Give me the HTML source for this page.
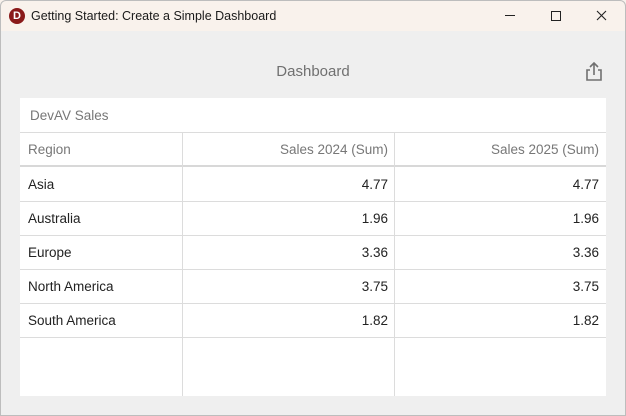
<!DOCTYPE html>
<html><head><style>
*{margin:0;padding:0;box-sizing:border-box}
body{width:626px;height:416px;overflow:hidden;background:#efefef;font-family:"Liberation Sans","DejaVu Sans",sans-serif;position:relative}
.frame{position:absolute;left:0;top:0;width:626px;height:416px;border:1px solid #bdbdbd;border-radius:6px 6px 0 0;pointer-events:none}
.tb{position:absolute;left:0;top:0;width:626px;height:31px;background:#f9f2ec}
.logo{position:absolute;left:9px;top:8px;width:16px;height:16px;border-radius:50%;background:#8a1a1a;color:#fff;font-size:11px;font-weight:bold;text-align:center;line-height:16px}
.ttl{position:absolute;left:31px;top:9px;font-size:12.5px;color:#1a1a1a}
.dash{position:absolute;left:0;width:626px;top:63px;text-align:center;font-size:15px;color:#707070}
.card{position:absolute;left:20px;top:98px;width:586px;height:298px;background:#fff}
.cap{height:35px;line-height:36px;padding-left:10px;color:#777;font-size:13.5px;border-bottom:1px solid #dcdcdc}
.row{position:absolute;left:0;width:586px;height:34px;border-bottom:1px solid #dcdcdc;font-size:13.5px;color:#222}
.row div{position:absolute;top:0;line-height:34px}
.c1{left:8px}.c2{right:218px}.c3{right:7px}
.hd{color:#777;border-bottom:2px solid #d8d8d8}
.vl{position:absolute;top:35px;width:1px;height:263px;background:#dcdcdc}
</style></head><body>
<div class="tb"><div class="logo">D</div><div class="ttl">Getting Started: Create a Simple Dashboard</div>
<svg style="position:absolute;left:500px;top:8px" width="120" height="16" viewBox="0 0 120 16"><path d="M5 7.5h10" stroke="#222" stroke-width="1"/><rect x="51.5" y="3.5" width="9" height="9" fill="none" stroke="#222"/><path d="M97 3l9 9M106 3l-9 9" stroke="#222" stroke-width="1.1"/></svg></div>
<div class="dash">Dashboard</div>
<svg style="position:absolute;left:584px;top:61px" width="20" height="20" viewBox="0 0 20 20"><path d="M6 9H3v10h14V9h-3M10 14V2M6 6l4-4 4 4" fill="none" stroke="#707070" stroke-width="1.6"/></svg>
<div class="card">
<div class="cap">DevAV Sales</div>
<div class="row hd" style="top:35px"><div class="c1">Region</div><div class="c2">Sales 2024 (Sum)</div><div class="c3">Sales 2025 (Sum)</div></div>
<div class="row" style="top:70px"><div class="c1">Asia</div><div class="c2">4.77</div><div class="c3">4.77</div></div>
<div class="row" style="top:104px"><div class="c1">Australia</div><div class="c2">1.96</div><div class="c3">1.96</div></div>
<div class="row" style="top:138px"><div class="c1">Europe</div><div class="c2">3.36</div><div class="c3">3.36</div></div>
<div class="row" style="top:172px"><div class="c1">North America</div><div class="c2">3.75</div><div class="c3">3.75</div></div>
<div class="row" style="top:206px"><div class="c1">South America</div><div class="c2">1.82</div><div class="c3">1.82</div></div>
<div class="vl" style="left:162px"></div><div class="vl" style="left:374px"></div>
</div>
<div class="frame"></div>
</body></html>
